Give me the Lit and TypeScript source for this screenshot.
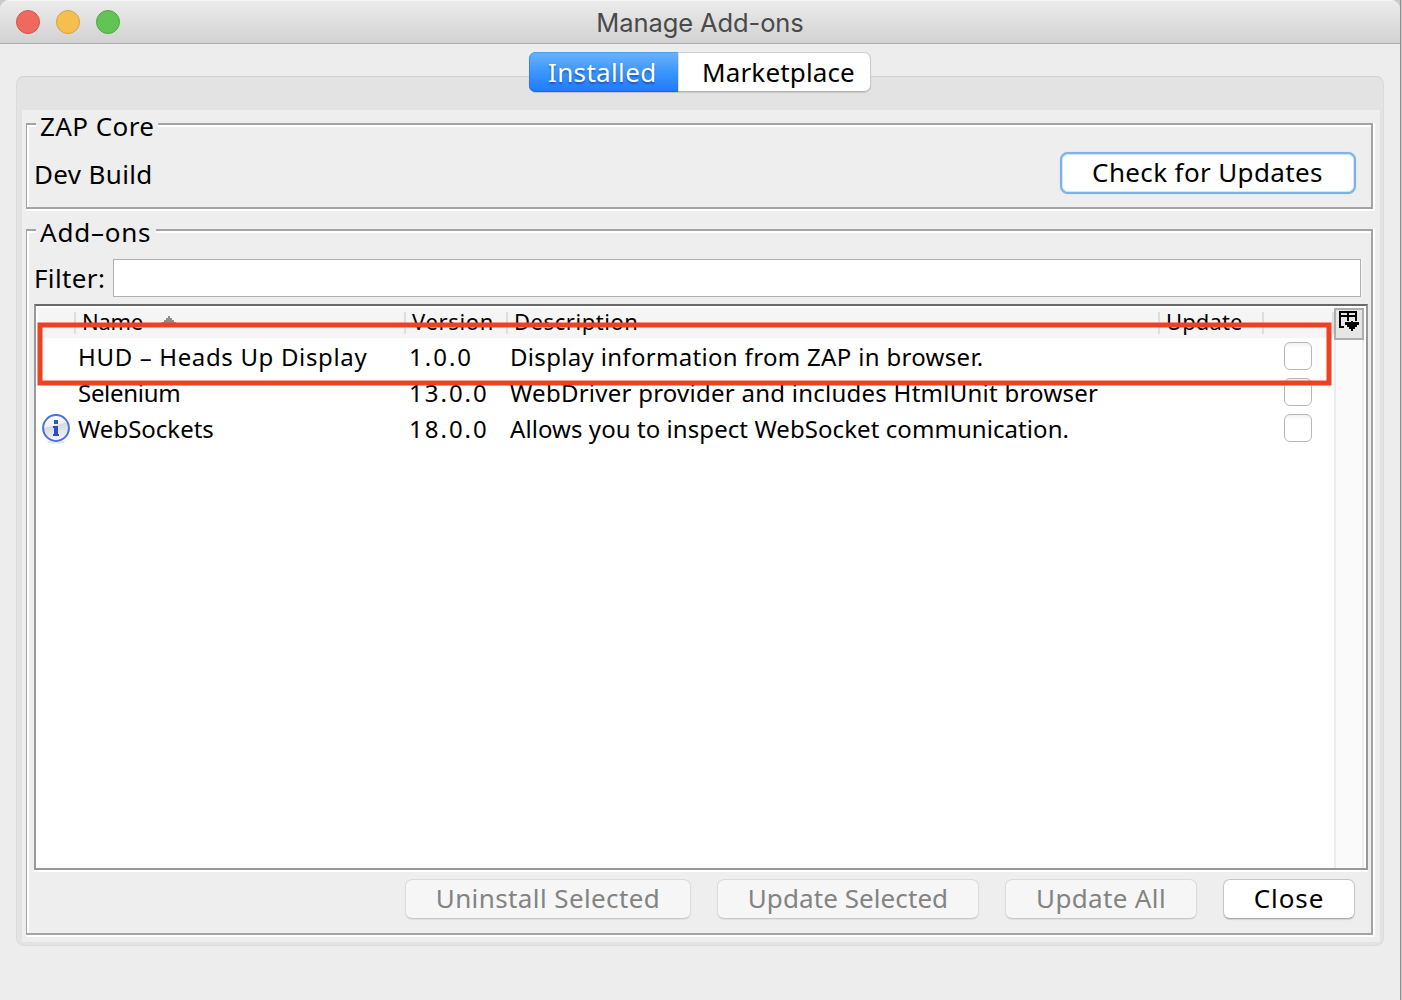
import { LitElement, html, css, svg, nothing } from "lit";
import { customElement } from "lit/decorators.js";
import { styleMap } from "lit/directives/style-map.js";

interface AddOn {
  name: string;
  nameSpacing: number;
  version: string;
  description: string;
  descriptionSpacing: number;
  info?: boolean;
}

const ADD_ONS: AddOn[] = [
  { name: "HUD – Heads Up Display", nameSpacing: 0.65, version: "1.0.0", description: "Display information from ZAP in browser.", descriptionSpacing: 0.32 },
  { name: "Selenium", nameSpacing: -0.3, version: "13.0.0", description: "WebDriver provider and includes HtmlUnit browser", descriptionSpacing: 0.25 },
  { name: "WebSockets", nameSpacing: 0, version: "18.0.0", description: "Allows you to inspect WebSocket communication.", descriptionSpacing: 0.07, info: true },
];

const track = (text: string, spacing: number) =>
  html`<span style=${styleMap({ letterSpacing: `${spacing}px` })}>${text}</span>`;

@customElement("app-root")
export class AppRoot extends LitElement {
  static styles = css`
    :host {
      display: block;
      font: 26px "Noto Sans", "Open Sans", sans-serif;
      color: #000;
    }
    * { box-sizing: border-box; }
    .desktop {
      position: relative;
      width: 1402px;
      height: 1000px;
      overflow: hidden;
      background: linear-gradient(90deg, #8e8e8e 50%, #c9c9c9 50%) right / 2px 100% no-repeat, #c9c9c9;
    }
    .window {
      width: 1400px;
      height: 1000px;
      background: #ededed;
      border-radius: 9px 9px 0 0;
      overflow: hidden;
    }
    .titlebar {
      display: grid;
      grid-template-columns: 200px 1fr 200px;
      align-items: center;
      height: 44px;
      background: linear-gradient(#ececec, #d2d2d2);
      border-bottom: 1px solid #adadad;
      box-shadow: inset 0 1px #f6f6f6;
    }
    .lights { display: flex; gap: 16px; padding-left: 16px; }
    .light { width: 24px; height: 24px; border-radius: 50%; border: 1px solid; }
    .red { background: #ee6a5f; border-color: #d9544b; }
    .yellow { background: #f5be4f; border-color: #dba13c; }
    .green { background: #61c454; border-color: #4eab42; }
    .title {
      text-align: center;
      font: 25.5px/32px Inter, "Liberation Sans", sans-serif;
      letter-spacing: -0.1px;
      color: #4a4a4a;
      padding-top: 3px;
    }
    .tabs { position: relative; z-index: 1; display: flex; height: 40px; margin: 8px 0 0 529px; width: 342px; }
    .tab { line-height: 40px; height: 40px; white-space: nowrap; }
    .tab-on {
      width: 149px;
      padding-left: 19px;
      color: #fff;
      text-shadow: 0 2px 2px rgba(0, 40, 120, 0.5);
      border-radius: 7px 0 0 7px;
      background: linear-gradient(#6bb3fa, #3b96fc 50%, #2179fe);
      box-shadow: inset 0 1px #4ea0f5, inset 0 -1px #1563ee, inset 1px 0 rgba(30, 110, 230, 0.5), 0 1px 1px rgba(0, 0, 0, 0.15);
    }
    .tab-off {
      width: 193px;
      padding-left: 24px;
      background: #fff;
      border-radius: 0 7px 7px 0;
      box-shadow: inset 0 1px #cdcdcd, inset -1px 0 #cacaca, inset 0 -1px #b2b2b2, inset 1px 0 #dcdcdc, 0 1px 1px rgba(0, 0, 0, 0.12);
    }
    .pane {
      margin: -16px 16px 0;
      height: 870px;
      padding: 33px 3px 3px 5px;
      background: #e3e3e3;
      border: 1px solid #dcdcdc;
      border-top-color: #d2d2d2;
      border-radius: 8px;
    }
    .content {
      display: flex;
      flex-direction: column;
      gap: 20px;
      height: 832px;
      padding: 13px 0 0 4px;
      background: #eee;
    }
    .group {
      width: 1347px;
      border: 2px solid #a3a3a3;
      border-left-width: 1px;
      box-shadow: 2px 0 #fff, 0 2px #fff, 2px 2px #fff, inset 2px 2px #fff;
    }
    .core { height: 86px; }
    .addons { height: 706px; }
    .legend {
      width: 122px;
      height: 24px;
      margin: -11px 0 0 9px;
      padding-left: 4px;
      line-height: 24px;
      white-space: nowrap;
      background: #eee;
    }
    .legend-short { width: 120px; }
    .core-row { display: flex; justify-content: space-between; align-items: center; height: 42px; margin: 14px 15px 0 7px; }
    .label { line-height: 44px; padding-top: 1px; }
    .btn {
      display: flex;
      justify-content: center;
      height: 40px;
      line-height: 36px;
      white-space: nowrap;
      background: #fff;
      border: 1px solid #c6c6c6;
      border-bottom-color: #a9a9a9;
      border-radius: 7px;
      box-shadow: 0 1px 1px rgba(0, 0, 0, 0.12);
    }
    .btn-focus {
      width: 296px;
      height: 42px;
      padding-right: 1px;
      border: 2px solid #7fb0e8;
      border-radius: 8px;
      box-shadow: inset 0 0 1px 1px #cfe4fb, 0 0 1px #9cc4f2;
    }
    .btn-off { color: #838383; background: #f6f6f6; border-color: #dadada; border-bottom-color: #c9c9c9; box-shadow: 0 1px 1px rgba(0, 0, 0, 0.06); }
    .w286 { width: 286px; }
    .w262 { width: 262px; }
    .w192 { width: 192px; }
    .w132 { width: 132px; }
    .filter-row { display: flex; align-items: center; height: 38px; margin: 15px 10px 0 7px; }
    .filter-label { width: 79px; line-height: 38px; }
    .field { flex: 1; height: 38px; background: #fff; border: 1px solid #b0b0b0; box-shadow: 1px 0 #f8f8f8; }
    .scroll {
      display: flex;
      width: 1334px;
      height: 566px;
      margin: 7px 0 0 7px;
      background: #fff;
      border: 2px solid #999;
      border-top-color: #696969;
      box-shadow: 0 2px #fff;
      padding-top: 2px;
    }
    .table { width: 1298px; }
    .cols { display: grid; grid-template-columns: 40px 330px 102px 652px 104px 70px; }
    .head { height: 30px; padding-top: 4px; background: #f5f5f5; box-shadow: inset 2px 0 #fff; }
    .th {
      display: flex;
      height: 22px;
      padding-left: 6px;
      border-right: 2px solid #dedede;
      font-size: 22px;
      line-height: 19px;
      white-space: nowrap;
    }
    .sort { width: 14px; height: 7px; margin: 4px 0 0 19px; }
    .row { height: 36px; grid-template-rows: 36px; align-items: center; font-size: 24px; line-height: 36px; white-space: nowrap; }
    .cell { padding: 2px 0 0 2px; }
    .version { letter-spacing: 2px; padding: 2px 0 0 3px; }
    .info { display: block; width: 28px; height: 30px; margin: 2px 0 0 6px; }
    .check {
      width: 28px;
      height: 28px;
      margin-left: 20px;
      border: 1px solid #b6b6b6;
      border-radius: 6px;
      background: linear-gradient(#f1f1f1, #fff 5px);
    }
    .bar { display: flex; flex-direction: column; width: 30px; }
    .chooser { width: 30px; height: 32px; background: #e6e6e6; border: 2px solid #adadad; }
    .chooser svg { display: block; }
    .track { flex: 1; background: #fafafa; border: 2px solid #ececec; border-width: 0 2px; }
    .actions { display: flex; justify-content: flex-end; gap: 26px; margin: 9px 16px 0 0; }
    .mark { position: absolute; left: 0; top: 300px; pointer-events: none; }
  `;

  private infoIcon() {
    return svg`<svg class="info" viewBox="0 0 28 30">
      <defs>
        <linearGradient id="g" x1="0" y1="0" x2="0.25" y2="1">
          <stop offset="0" stop-color="#fff"/><stop offset="0.46" stop-color="#f2f2f4"/>
          <stop offset="0.5" stop-color="#d8d9dd"/><stop offset="1" stop-color="#f4f4f6"/>
        </linearGradient>
      </defs>
      <ellipse cx="14" cy="28" rx="9" ry="1.6" fill="#e6e6e6"/>
      <circle cx="14" cy="14" r="12.9" fill="url(#g)" stroke="#4a6fe3" stroke-width="2"/>
      <rect x="12" y="6" width="4" height="4" fill="#2f55c8"/>
      <path d="M11 12h5v8h1v2h-6v-2h1v-6h-1z" fill="#2a4fc4"/>
    </svg>`;
  }

  private chooserIcon() {
    return svg`<svg width="26" height="28" viewBox="0 0 26 28" shape-rendering="crispEdges">
      <path d="M3 1h18v2H3zM3 5h18v2H3zM3 1h2v17H3zM19 1h2v10h-2zM11 1h2v10h-2zM3 16h5v2H3z" fill="#000"/>
      <path d="M15 11h2v1h6v3h-2v2h-2v2h-2v2h-2v-2h-2v-2h-2v-2H9v-3h6z" fill="#000"/>
    </svg>`;
  }

  render() {
    return html`
      <div class="desktop">
        <div class="window">
          <div class="titlebar">
            <div class="lights"><i class="light red"></i><i class="light yellow"></i><i class="light green"></i></div>
            <div class="title">Manage Add-ons</div>
          </div>
          <div class="tabs">
            <div class="tab tab-on">${track("Installed", 0.35)}</div>
            <div class="tab tab-off">${track("Marketplace", 0.15)}</div>
          </div>
          <div class="pane">
            <div class="content">
              <div class="group core">
                <div class="legend">${track("ZAP Core", 0.42)}</div>
                <div class="core-row">
                  <div class="label">${track("Dev Build", 0.35)}</div>
                  <div class="btn btn-focus">${track("Check for Updates", 0.37)}</div>
                </div>
              </div>
              <div class="group addons">
                <div class="legend legend-short">${track("Add–ons", 0.77)}</div>
                <div class="filter-row">
                  <div class="filter-label">${track("Filter:", 0.38)}</div>
                  <div class="field"></div>
                </div>
                <div class="scroll">
                  <div class="table">
                    <div class="cols head">
                      <div class="th"></div>
                      <div class="th">${track("Name", -0.3)}
                        <svg class="sort" viewBox="0 0 14 7" shape-rendering="crispEdges"><path d="M6 0h2v2h2v2h2v2h2v1H0V6h2V4h2V2h2z" fill="#8e8e8e"/></svg>
                      </div>
                      <div class="th">${track("Version", 0.65)}</div>
                      <div class="th">${track("Description", 0.55)}</div>
                      <div class="th">${track("Update", 0.1)}</div>
                      <div class="th"></div>
                    </div>
                    ${ADD_ONS.map((a) => html`
                      <div class="cols row">
                        <div>${a.info ? this.infoIcon() : nothing}</div>
                        <div class="cell">${track(a.name, a.nameSpacing)}</div>
                        <div class="version">${a.version}</div>
                        <div class="cell">${track(a.description, a.descriptionSpacing)}</div>
                        <div></div>
                        <div class="check"></div>
                      </div>`)}
                  </div>
                  <div class="bar">
                    <div class="chooser">${this.chooserIcon()}</div>
                    <div class="track"></div>
                  </div>
                </div>
                <div class="actions">
                  <div class="btn btn-off w286">${track("Uninstall Selected", 0.4)}</div>
                  <div class="btn btn-off w262">${track("Update Selected", 0.08)}</div>
                  <div class="btn btn-off w192">${track("Update All", 0.35)}</div>
                  <div class="btn w132">${track("Close", 0.92)}</div>
                </div>
              </div>
            </div>
          </div>
        </div>
        <svg class="mark" width="1402" height="100" viewBox="0 300 1402 100">
          <rect x="40" y="325" width="1289" height="58" fill="none" stroke="#ee4023" stroke-width="5"/>
        </svg>
      </div>`;
  }
}
